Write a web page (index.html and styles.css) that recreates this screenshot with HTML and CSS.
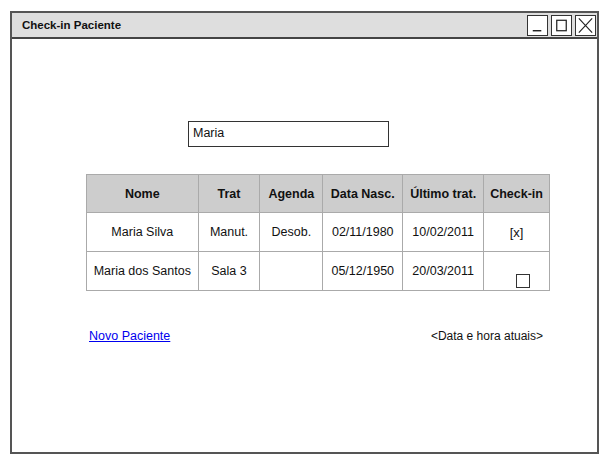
FILE: index.html
```html
<!DOCTYPE html>
<html>
<head>
<meta charset="utf-8">
<link rel="stylesheet" href="styles.css">
</head>
<body>
<div class="window">
  <div class="titlebar">
    <span class="title">Check-in Paciente</span>
    <div class="controls">
      <span class="ctl"><svg width="20" height="21" viewBox="0 0 20 21"><line x1="5" y1="16" x2="14" y2="16" stroke="#222" stroke-width="1.5"/></svg></span>
      <span class="ctl"><svg width="20" height="21" viewBox="0 0 20 21"><rect x="5" y="5" width="10" height="11" fill="none" stroke="#222" stroke-width="1.3"/></svg></span>
      <span class="ctl"><svg width="20" height="21" viewBox="0 0 20 21"><path d="M3 3 L17 18 M17 3 L3 18" stroke="#222" stroke-width="1.2" fill="none"/></svg></span>
    </div>
  </div>
  <div class="content">
    <div class="search">Maria</div>
    <table class="grid">
      <thead>
        <tr>
          <th class="c1">Nome</th>
          <th class="c2">Trat</th>
          <th class="c3">Agenda</th>
          <th class="c4">Data Nasc.</th>
          <th class="c5">Último trat.</th>
          <th class="c6">Check-in</th>
        </tr>
      </thead>
      <tbody>
        <tr>
          <td>Maria Silva</td>
          <td>Manut.</td>
          <td>Desob.</td>
          <td>02/11/1980</td>
          <td>10/02/2011</td>
          <td class="mark">[x]</td>
        </tr>
        <tr>
          <td>Maria dos Santos</td>
          <td>Sala 3</td>
          <td></td>
          <td>05/12/1950</td>
          <td>20/03/2011</td>
          <td class="boxcell"><span class="box"></span></td>
        </tr>
      </tbody>
    </table>
    <div class="footer">
      <a class="link" href="#">Novo Paciente</a>
      <span class="stamp">&lt;Data e hora atuais&gt;</span>
    </div>
  </div>
</div>
</body>
</html>
```

FILE: styles.css
```css
* { box-sizing: border-box; }
html, body { margin: 0; padding: 0; background: #fff; }
body {
  font-family: "Liberation Sans", Arial, sans-serif;
  color: #111;
  font-size: 12px;
}
.window {
  margin: 11px 0 0 10px;
  width: 589px;
  height: 443px;
  border: 2px solid #555;
  display: flex;
  flex-direction: column;
}
.titlebar {
  height: 26px;
  background: #dedede;
  border-bottom: 2px solid #444;
  display: flex;
  align-items: center;
  justify-content: space-between;
  padding: 0 1px 0 10px;
}
.title {
  font-weight: bold;
  font-size: 11.5px;
  color: #111;
}
.controls { display: flex; gap: 3px; }
.ctl {
  width: 21px;
  height: 21px;
  border: 1.5px solid #333;
  background: #fff;
  display: flex;
  align-items: center;
  justify-content: center;
}
.ctl svg { display: block; }
.content {
  flex: 1;
  padding: 82px 0 0 0;
}
.search {
  margin-left: 176px;
  width: 201px;
  height: 26px;
  border: 1.5px solid #333;
  padding: 4px 0 0 4px;
  font-size: 12.5px;
}
.grid {
  margin: 27px 0 0 74px;
  border-collapse: collapse;
  width: 464px;
  font-size: 12.5px;
}
.grid th, .grid td {
  border: 1px solid #aaa;
  text-align: center;
  padding: 0;
}
.grid th {
  background: #cdcdcd;
  height: 38px;
  font-weight: bold;
}
.grid td { height: 39px; }
.c1 { width: 112px; }
.c2 { width: 62px; }
.c3 { width: 63px; }
.c4 { width: 80px; }
.c5 { width: 81px; }
.c6 { width: 66px; }
.mark { font-size: 13px; }
.boxcell { vertical-align: bottom; }
.box {
  display: inline-block;
  width: 14px;
  height: 14px;
  border: 1.3px solid #333;
  margin: 0 0 2px 12px;
  vertical-align: bottom;
}
.footer {
  margin: 38px 0 0 77px;
  width: 454px;
  display: flex;
  justify-content: space-between;
  align-items: baseline;
}
.link {
  color: #0000ee;
  text-decoration: underline;
  font-size: 12.5px;
}
.stamp { font-size: 12px; }
```
